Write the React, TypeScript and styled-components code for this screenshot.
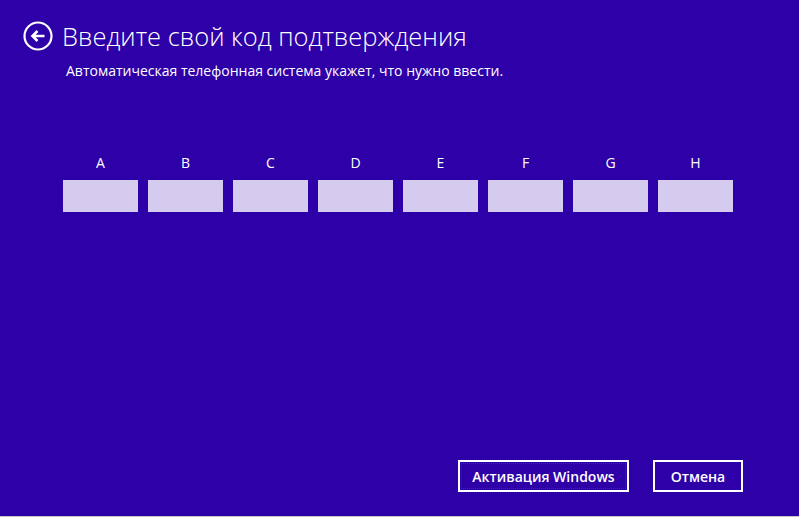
import React from "react";
import styled, { createGlobalStyle } from "styled-components";

const Global = createGlobalStyle`
  html, body { margin: 0; padding: 0; }
  body {
    background: #2e00a8;
    font-family: "Open Sans", "Noto Sans", sans-serif;
    color: #ffffff;
  }
`;

const Screen = styled.div`
  box-sizing: border-box;
  width: 799px;
  height: 517px;
  background: #2e00a8;
  border-bottom: 1px solid #c4c4c4;
  display: flex;
  flex-direction: column;
`;

const Header = styled.div`
  display: flex;
  align-items: center;
  gap: 9px;
  padding: 20px 0 0 23px;
  height: 32px;
`;

const BackButton = styled.button`
  width: 30px;
  height: 30px;
  padding: 0;
  border: none;
  background: none;
  display: flex;
  cursor: pointer;
`;

const Title = styled.h1`
  margin: 0;
  font-family: "Open Sans", sans-serif;
  font-weight: 300;
  font-size: 25.5px;
  line-height: 32px;
  color: #ffffff;
`;

const Subtitle = styled.p`
  margin: 10px 0 0 66px;
  font-size: 14px;
  line-height: 18px;
  color: #ffffff;
`;

const CodeRow = styled.div`
  display: flex;
  gap: 10px;
  margin: 74px 0 0 63px;
`;

const CodeCell = styled.label`
  display: flex;
  flex-direction: column;
  align-items: center;
  gap: 9px;
  width: 75px;
`;

const CellLetter = styled.span`
  font-size: 14px;
  line-height: 17px;
  color: #ffffff;
`;

const CellInput = styled.input`
  box-sizing: border-box;
  width: 75px;
  height: 32px;
  border: none;
  outline: none;
  background: #d4cbee;
  padding: 0 6px;
  font-family: inherit;
  font-size: 14px;
`;

const Footer = styled.div`
  margin-top: auto;
  display: flex;
  justify-content: flex-end;
  gap: 24px;
  padding: 0 56px 24px 0;
`;

const Button = styled.button<{ $focused?: boolean; $width: number }>`
  box-sizing: border-box;
  width: ${(p) => p.$width}px;
  height: 32px;
  border: 2px solid #ffffff;
  background: #2e00a8;
  color: #ffffff;
  font-family: "Open Sans", sans-serif;
  font-weight: 600;
  font-size: 14px;
  padding: 0;
  position: relative;
  cursor: pointer;
  &::after {
    content: "";
    display: ${(p) => (p.$focused ? "block" : "none")};
    position: absolute;
    inset: 1px;
    border: 1px dotted rgba(255, 255, 255, 0.12);
  }
`;

const letters = ["A", "B", "C", "D", "E", "F", "G", "H"];

function BackIcon() {
  return (
    <svg width="30" height="30" viewBox="0 0 30 30" fill="none">
      <circle cx="15" cy="15" r="13.5" stroke="#ffffff" strokeWidth="2.2" />
      <path
        d="M21.5 15H10M14.5 10L9.5 15L14.5 20"
        stroke="#ffffff"
        strokeWidth="2.6"
        strokeLinecap="butt"
        strokeLinejoin="miter"
      />
    </svg>
  );
}

export default function App() {
  return (
    <>
      <Global />
      <Screen>
        <Header>
          <BackButton aria-label="Назад">
            <BackIcon />
          </BackButton>
          <Title>Введите свой код подтверждения</Title>
        </Header>
        <Subtitle>Автоматическая телефонная система укажет, что нужно ввести.</Subtitle>
        <CodeRow>
          {letters.map((l) => (
            <CodeCell key={l}>
              <CellLetter>{l}</CellLetter>
              <CellInput aria-label={l} />
            </CodeCell>
          ))}
        </CodeRow>
        <Footer>
          <Button $focused $width={171}>Активация Windows</Button>
          <Button $width={90}>Отмена</Button>
        </Footer>
      </Screen>
    </>
  );
}
